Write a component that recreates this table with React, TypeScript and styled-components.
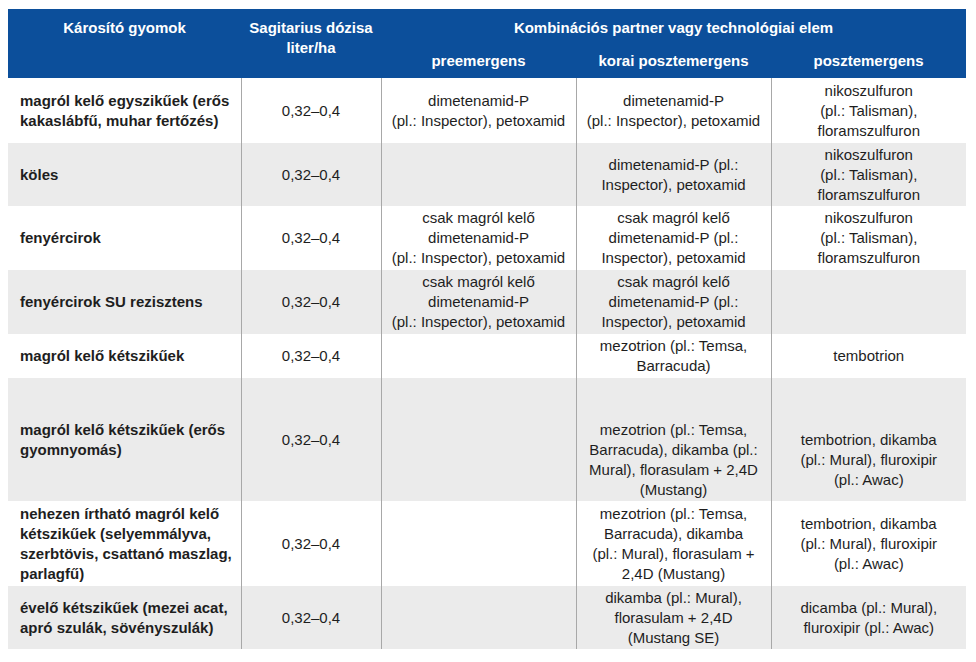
import React from "react";
import styled, { createGlobalStyle } from "styled-components";

const Global = createGlobalStyle`
  html, body { background: #ffffff; }
  body {
    margin: 9px 0 0 8px;
    font-family: "Liberation Sans", Arial, sans-serif;
  }
`;

const Table = styled.table`
  width: 958px;
  border-collapse: collapse;
  table-layout: fixed;
  font-family: "Liberation Sans", Arial, sans-serif;
  font-size: 15px;
  line-height: 20px;
  color: #1e1e1e;
`;

const HeadRow = styled.tr`
  background: #0c4f9b;
`;

const Th = styled.th<{ $top?: number; $bottom?: number }>`
  color: #ffffff;
  font-weight: bold;
  text-align: center;
  vertical-align: top;
  padding: ${(p) => p.$top ?? 9}px 4px ${(p) => p.$bottom ?? 9}px;
  white-space: nowrap;
`;

const Row = styled.tr<{ $shade: boolean; $h: number }>`
  background: ${(p) => (p.$shade ? "#ebebeb" : "#ffffff")};
  height: ${(p) => p.$h}px;
`;

const NameCell = styled.td`
  font-weight: bold;
  text-align: left;
  vertical-align: middle;
  padding: 0 4px 0 12px;
  white-space: nowrap;
`;

const Cell = styled.td<{ $shift?: number }>`
  text-align: center;
  vertical-align: middle;
  padding: ${(p) => p.$shift ?? 0}px 2px 0;
  border-left: 1px solid #a8a8a8;
  white-space: nowrap;
`;

type Line = string[];
type RowData = {
  name: Line;
  pre: Line;
  korai: Line;
  poszt: Line;
  h: number;
  shift?: number;
};

const rows: RowData[] = [
  {
    name: ["magról kelő egyszikűek (erős", "kakaslábfű, muhar fertőzés)"],
    pre: ["dimetenamid-P", "(pl.: Inspector), petoxamid"],
    korai: ["dimetenamid-P", "(pl.: Inspector), petoxamid"],
    poszt: ["nikoszulfuron", "(pl.: Talisman),", "floramszulfuron"],
    h: 65,
  },
  {
    name: ["köles"],
    pre: [],
    korai: ["dimetenamid-P (pl.:", "Inspector), petoxamid"],
    poszt: ["nikoszulfuron", "(pl.: Talisman),", "floramszulfuron"],
    h: 63,
  },
  {
    name: ["fenyércirok"],
    pre: ["csak magról kelő", "dimetenamid-P", "(pl.: Inspector), petoxamid"],
    korai: ["csak magról kelő", "dimetenamid-P (pl.:", "Inspector), petoxamid"],
    poszt: ["nikoszulfuron", "(pl.: Talisman),", "floramszulfuron"],
    h: 64,
  },
  {
    name: ["fenyércirok SU rezisztens"],
    pre: ["csak magról kelő", "dimetenamid-P", "(pl.: Inspector), petoxamid"],
    korai: ["csak magról kelő", "dimetenamid-P (pl.:", "Inspector), petoxamid"],
    poszt: [],
    h: 64,
  },
  {
    name: ["magról kelő kétszikűek"],
    pre: [],
    korai: ["mezotrion (pl.: Temsa,", "Barracuda)"],
    poszt: ["tembotrion"],
    h: 44,
  },
  {
    name: ["magról kelő kétszikűek (erős", "gyomnyomás)"],
    pre: [],
    korai: [
      "mezotrion (pl.: Temsa,",
      "Barracuda), dikamba (pl.:",
      "Mural), florasulam + 2,4D",
      "(Mustang)",
    ],
    poszt: ["tembotrion, dikamba", "(pl.: Mural), fluroxipir", "(pl.: Awac)"],
    h: 123,
    shift: 40,
  },
  {
    name: [
      "nehezen írtható magról kelő",
      "kétszikűek (selyemmályva,",
      "szerbtövis, csattanó maszlag,",
      "parlagfű)",
    ],
    pre: [],
    korai: [
      "mezotrion (pl.: Temsa,",
      "Barracuda), dikamba",
      "(pl.: Mural), florasulam +",
      "2,4D (Mustang)",
    ],
    poszt: ["tembotrion, dikamba", "(pl.: Mural), fluroxipir", "(pl.: Awac)"],
    h: 85,
  },
  {
    name: ["évelő kétszikűek (mezei acat,", "apró szulák, sövényszulák)"],
    pre: [],
    korai: ["dikamba (pl.: Mural),", "florasulam + 2,4D", "(Mustang SE)"],
    poszt: ["dicamba (pl.: Mural),", "fluroxipir (pl.: Awac)"],
    h: 63,
  },
];

const Lines: React.FC<{ lines: Line }> = ({ lines }) => (
  <>
    {lines.map((l, i) => (
      <React.Fragment key={i}>
        {i > 0 && <br />}
        {l}
      </React.Fragment>
    ))}
  </>
);

export default function App() {
  return (
    <>
      <Global />
      <Table>
        <colgroup>
          <col style={{ width: 233 }} />
          <col style={{ width: 140 }} />
          <col style={{ width: 195 }} />
          <col style={{ width: 195 }} />
          <col style={{ width: 195 }} />
        </colgroup>
        <thead>
          <HeadRow>
            <Th rowSpan={2}>Károsító gyomok</Th>
            <Th rowSpan={2}>
              Sagitarius dózisa
              <br />
              liter/ha
            </Th>
            <Th colSpan={3}>Kombinációs partner vagy technológiai elem</Th>
          </HeadRow>
          <HeadRow>
            <Th $top={4} $bottom={7}>preemergens</Th>
            <Th $top={4} $bottom={7}>korai posztemergens</Th>
            <Th $top={4} $bottom={7}>posztemergens</Th>
          </HeadRow>
        </thead>
        <tbody>
          {rows.map((r, i) => (
            <Row key={i} $shade={i % 2 === 1} $h={r.h}>
              <NameCell>
                <Lines lines={r.name} />
              </NameCell>
              <Cell>0,32–0,4</Cell>
              <Cell>
                <Lines lines={r.pre} />
              </Cell>
              <Cell $shift={r.shift}>
                <Lines lines={r.korai} />
              </Cell>
              <Cell $shift={r.shift}>
                <Lines lines={r.poszt} />
              </Cell>
            </Row>
          ))}
        </tbody>
      </Table>
    </>
  );
}
